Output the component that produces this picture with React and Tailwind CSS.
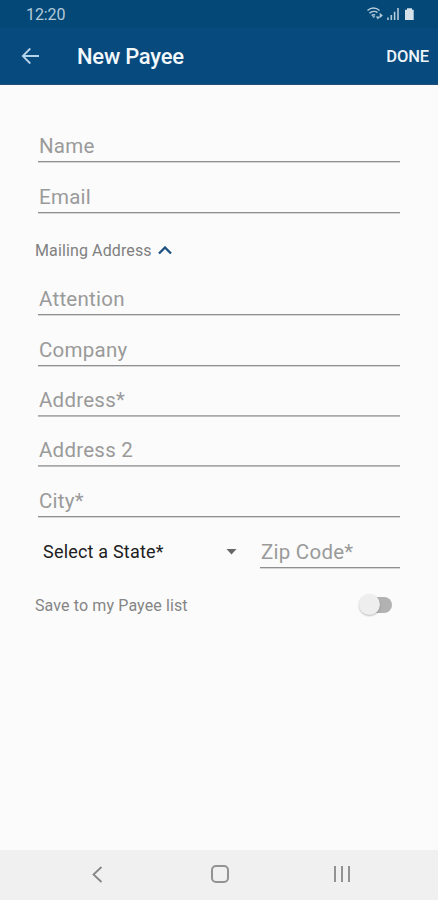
function Field({ label, className = "", soft = false }) {
  const line = soft
    ? "border-[#a9a9a9] shadow-[0_1px_0_#bdbdbd]"
    : "border-[#8f8f8f] shadow-[0_1px_0_#d6d6d6]";
  return (
    <label
      className={`flex items-end border-b text-[20.5px] leading-[24px] tracking-[0.25px] text-[#9a9a9a] ${line} ${className}`}
    >
      <span className="pb-[3.5px]">{label}</span>
    </label>
  );
}

function StatusIcons() {
  return (
    <svg width="50" height="16" viewBox="0 0 50 16" fill="none" className="text-[#b3cadb]">
      <path d="M1.500 4.600C5 1.200 10 1.200 13.500 4.600M3.500 7.100C6 5 9.500 5 11.500 6.600M5.600 9.500C6.800 8.500 8 8.500 9.200 9.200" stroke="currentColor" strokeWidth="1.4" />
      <path d="M7.700 12 6 10.200h3.400z" fill="currentColor" />
      <path d="M9.800 10.600h4.200l-2.100 2.900zM13.700 6.800l3.200 2.700-3.200 2.700z" fill="currentColor" />
      <path d="M22 11.500V14M25.300 9v5M28.600 5.800V14M32 2v12" stroke="currentColor" strokeWidth="1.6" />
      <path d="M41 2.200h5v1.600h1.700V14H39V3.800h2z" fill="#d5e2ea" />
    </svg>
  );
}

export default function App() {
  return (
    <div className="flex h-[900px] w-[438px] flex-col overflow-hidden bg-[#fbfbfb] font-[Roboto,sans-serif]">
      <header className="flex h-[85px] shrink-0 flex-col border-b border-[#224f7c] bg-[#074a7d]">
        <div className="flex h-[28px] items-center justify-between bg-[#034876] pl-[26px] pr-[22px]">
          <span className="pt-px text-[16px] leading-[27px] tracking-[-0.1px] text-[#b3cadb]">12:20</span>
          <StatusIcons />
        </div>
        <div className="flex flex-1 items-center pl-[21px] pr-[9px] pt-px">
          <svg className="mb-[2px]" width="19" height="18" viewBox="0 0 19 18" fill="none" stroke="#b5d3e9" strokeWidth="1.8">
            <path d="M18 9H2M9.300 1.500 1.800 9l7.500 7.500" />
          </svg>
          <h1 className="ml-[37px] pt-px text-[22px] font-medium leading-[28px] tracking-[-0.25px] text-[#f2f8fc]">New Payee</h1>
          <button className="ml-auto text-[16.5px] font-medium leading-[24px] tracking-[-0.1px] text-[#edf5fa]">DONE</button>
        </div>
      </header>
      <main className="flex flex-1 flex-col px-[38px] pt-[26px]">
        <Field label="Name" className="h-[51px] pl-px" />
        <Field label="Email" className="h-[51px] pl-px" />
        <div className="-ml-[3px] flex h-[51px] items-center pt-[24px] text-[16px] leading-[26px] tracking-[0.12px] text-[#808080]">
          <span>Mailing Address</span>
          <svg className="ml-[6px]" width="14" height="9" viewBox="0 0 14 9" fill="none" stroke="#1d4f80" strokeWidth="2.3">
            <path d="m1 7.500 6-6 6 6" />
          </svg>
        </div>
        <Field label="Attention" className="h-[51px] pl-px" />
        <Field label="Company" className="h-[51px] pl-px" />
        <Field label="Address*" className="h-[50px] pl-px" soft />
        <Field label="Address 2" className="h-[50px] pl-px" soft />
        <Field label="City*" className="h-[51px] pl-px" />
        <div className="flex h-[51px] justify-between">
          <div className="flex w-[199px] items-center justify-between pl-[5px] pt-[18px]">
            <span className="text-[18px] leading-[24px] tracking-[0.2px] text-[#202020]">Select a State*</span>
            <svg width="11" height="6" viewBox="0 0 11 6" fill="#666666">
              <path d="M0.500 0h10L5.500 5.500z" />
            </svg>
          </div>
          <Field label="Zip Code*" className="w-[140px] pl-px" />
        </div>
        <div className="-ml-[3px] flex h-[73px] items-center justify-between pr-[8px]">
          <span className="pt-[2px] text-[16px] leading-[24px] tracking-[0.12px] text-[#858585]">Save to my Payee list</span>
          <div className="flex h-[16px] w-[31px] items-center rounded-full bg-gradient-to-r from-transparent from-30% to-[#b2b2b2] to-30%">
            <div className="-ml-[2px] size-[21px] shrink-0 rounded-full bg-[#eeeeee] shadow-[0_1px_2px_rgba(0,0,0,0.25)]" />
          </div>
        </div>
      </main>
      <nav className="flex h-[50px] shrink-0 items-center bg-[#f0f0f0] pb-[2px] text-[#858585]">
        <svg className="ml-[92px]" width="11" height="17" viewBox="0 0 11 17" fill="none" stroke="currentColor" strokeWidth="1.8">
          <path d="M9.500 1 1.500 8.500l8 7.500" />
        </svg>
        <div className="ml-[108px] size-[18px] rounded-[5px] border-2 border-[#929292]" />
        <div className="ml-[105px] flex h-[16px] w-[16px] justify-between">
          <i className="w-[2px] bg-[#929292]" />
          <i className="w-[2px] bg-[#929292]" />
          <i className="w-[2px] bg-[#929292]" />
        </div>
      </nav>
    </div>
  );
}
